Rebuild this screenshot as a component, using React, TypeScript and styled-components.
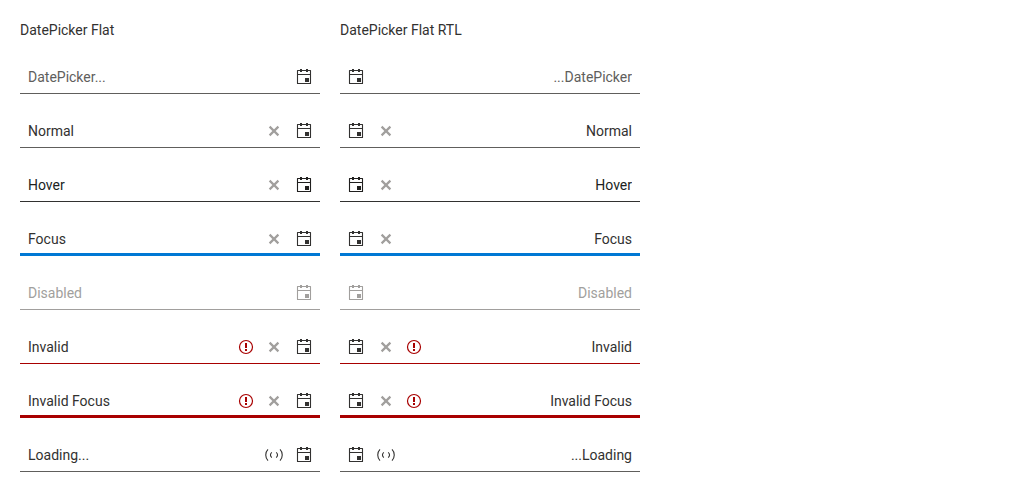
import React from "react";
import styled, { createGlobalStyle, css } from "styled-components";

const GlobalStyle = createGlobalStyle`
  *, *::before, *::after { box-sizing: border-box; }
  body {
    margin: 0;
    background: #ffffff;
    color: #323130;
    font-family: Roboto, "Liberation Sans", sans-serif;
    font-size: 14px;
    line-height: 20px;
  }
`;

type Status = "normal" | "hover" | "focus" | "disabled" | "invalid" | "invalidFocus";

const LINE: Record<Status, { color: string; width: number }> = {
  normal: { color: "#605e5c", width: 1 },
  hover: { color: "#323130", width: 1 },
  focus: { color: "#0078d4", width: 3 },
  disabled: { color: "#a19f9d", width: 1 },
  invalid: { color: "#a80000", width: 1 },
  invalidFocus: { color: "#a80000", width: 3 },
};

const Page = styled.main`
  display: flex;
  flex-wrap: wrap;
  gap: 20px;
  padding: 20px;
`;

const Column = styled.section`
  display: flex;
  flex-direction: column;
  flex: 0 1 300px;
  min-width: 0;
  gap: 20px;
`;

const Title = styled.h2`
  margin: 0;
  font-size: 14px;
  font-weight: 400;
`;

const Field = styled.div<{ $status: Status }>`
  display: flex;
  align-items: stretch;
  height: 34px;
  color: #323130;
  box-shadow: inset 0 -${(p) => LINE[p.$status].width}px ${(p) => LINE[p.$status].color};
  ${(p) => p.$status === "hover" && css`color: #201f1e;`}
  ${(p) => p.$status === "disabled" && css`color: #a19f9d;`}
`;

const TextInput = styled.input`
  flex: 1;
  min-width: 0;
  padding: 0 8px;
  border: 0;
  outline: 0;
  background: transparent;
  color: inherit;
  font: inherit;
  &::placeholder {
    color: #605e5c;
    opacity: 1;
  }
`;

const iconBox = css`
  display: flex;
  flex: none;
  align-items: center;
  justify-content: center;
`;

const Indicator = styled.span<{ $color: string }>`
  ${iconBox}
  width: 28px;
  color: ${(p) => p.$color};
`;

const IconButton = styled.button`
  ${iconBox}
  width: 28px;
  padding: 0;
  border: 0;
  background: transparent;
  color: inherit;
  cursor: pointer;
  &:disabled { cursor: default; }
`;

const ClearButton = styled(IconButton)`
  color: #a19f9d;
`;

const CalendarButton = styled(IconButton)`
  width: 32px;
`;

const Svg = styled.svg.attrs({ width: 16, height: 16, viewBox: "0 0 16 16", "aria-hidden": true })`
  display: block;
  overflow: visible;
  fill: none;
  stroke: currentColor;
`;

const CalendarIcon = () => (
  <Svg>
    <path d="M1.5 1.5h13v13h-13zM1.5 5.5h13" strokeWidth="1.1" strokeLinejoin="round" />
    <path d="M4 0h2v3H4zM10 0h2v3h-2zM9 9h4v4H9z" fill="currentColor" stroke="none" />
  </Svg>
);

const ClearIcon = () => (
  <Svg>
    <path d="M3.6 3.6l8.8 8.8M12.4 3.6l-8.8 8.8" strokeWidth="2.2" />
  </Svg>
);

const WarningIcon = () => (
  <Svg>
    <circle cx="8" cy="8" r="6.5" strokeWidth="1.2" />
    <path d="M7 4h2v5H7zM7 10h2v2H7z" fill="currentColor" stroke="none" />
  </Svg>
);

const LoadingIcon = () => (
  <Svg>
    <path d="M2 2.4C-1 5.4-1 10.6 2 13.6M14 2.4c3 3 3 8.2 0 11.2" strokeWidth="1.1" />
    <path d="M5.8 5.4c-1.8 1.6-1.8 3.6 0 5.2M10.2 5.4c1.8 1.6 1.8 3.6 0 5.2" strokeWidth="1.1" />
  </Svg>
);

interface Row {
  text: string;
  status: Status;
  placeholder?: boolean;
  clear?: boolean;
  loading?: boolean;
}

const ROWS: Row[] = [
  { text: "DatePicker...", status: "normal", placeholder: true },
  { text: "Normal", status: "normal", clear: true },
  { text: "Hover", status: "hover", clear: true },
  { text: "Focus", status: "focus", clear: true },
  { text: "Disabled", status: "disabled" },
  { text: "Invalid", status: "invalid", clear: true },
  { text: "Invalid Focus", status: "invalidFocus", clear: true },
  { text: "Loading...", status: "normal", loading: true },
];

function DatePicker({ text, status, placeholder, clear, loading }: Row) {
  const disabled = status === "disabled";
  const invalid = status === "invalid" || status === "invalidFocus";
  return (
    <Field $status={status}>
      <TextInput
        type="text"
        aria-label={text}
        aria-invalid={invalid}
        disabled={disabled}
        placeholder={placeholder ? text : undefined}
        defaultValue={placeholder ? undefined : text}
      />
      {invalid && <Indicator $color="#a80000"><WarningIcon /></Indicator>}
      {clear && <ClearButton type="button" aria-label="Clear"><ClearIcon /></ClearButton>}
      {loading && <Indicator $color="#323130"><LoadingIcon /></Indicator>}
      <CalendarButton type="button" aria-label="Open calendar" disabled={disabled}>
        <CalendarIcon />
      </CalendarButton>
    </Field>
  );
}

function PickerColumn({ title, direction }: { title: string; direction: "ltr" | "rtl" }) {
  return (
    <Column dir={direction}>
      <Title dir="ltr">{title}</Title>
      {ROWS.map((row) => <DatePicker key={row.text} {...row} />)}
    </Column>
  );
}

export default function App() {
  return (
    <>
      <GlobalStyle />
      <Page>
        <PickerColumn title="DatePicker Flat" direction="ltr" />
        <PickerColumn title="DatePicker Flat RTL" direction="rtl" />
      </Page>
    </>
  );
}
